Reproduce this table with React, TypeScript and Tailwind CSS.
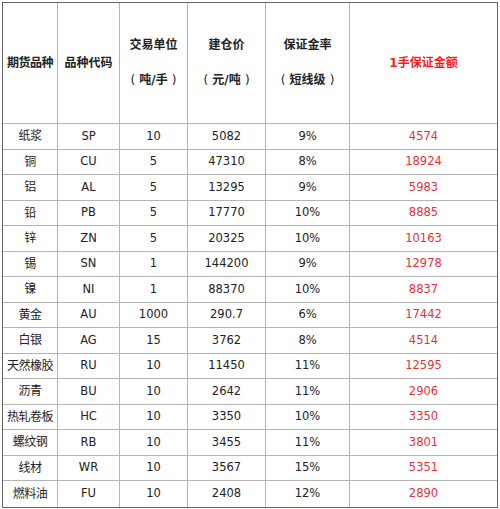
const rows: [string, string, string, string, string, string][] = [
  ["纸浆", "SP", "10", "5082", "9%", "4574"],
  ["铜", "CU", "5", "47310", "8%", "18924"],
  ["铝", "AL", "5", "13295", "9%", "5983"],
  ["铅", "PB", "5", "17770", "10%", "8885"],
  ["锌", "ZN", "5", "20325", "10%", "10163"],
  ["锡", "SN", "1", "144200", "9%", "12978"],
  ["镍", "NI", "1", "88370", "10%", "8837"],
  ["黄金", "AU", "1000", "290.7", "6%", "17442"],
  ["白银", "AG", "15", "3762", "8%", "4514"],
  ["天然橡胶", "RU", "10", "11450", "11%", "12595"],
  ["沥青", "BU", "10", "2642", "11%", "2906"],
  ["热轧卷板", "HC", "10", "3350", "10%", "3350"],
  ["螺纹钢", "RB", "10", "3455", "11%", "3801"],
  ["线材", "WR", "10", "3567", "15%", "5351"],
  ["燃料油", "FU", "10", "2408", "12%", "2890"],
];

export default function App() {
  return (
    <div className="w-[500px] h-[509px] bg-white pt-[2px] pl-[2px] font-['DejaVu_Sans','Noto_Sans_CJK_SC',sans-serif] text-[#222]">
      <div className="w-[496px] border border-[#666] grid grid-cols-[55px_62px_68px_78px_84px_1fr]">
        {/* 表头 */}
        <div className="h-[121px] flex items-center justify-center border-r border-b border-[#b4b4b4] font-bold text-[12px] tracking-[-0.5px]">
          期货品种
        </div>
        <div className="h-[121px] flex items-center justify-center border-r border-b border-[#b4b4b4] font-bold text-[12px]">
          品种代码
        </div>
        <div className="h-[121px] flex items-center justify-center text-center border-r border-b border-[#b4b4b4] font-bold text-[12px] leading-[35px]">
          <div>
            交易单位
            <br />
            <span className="font-normal">(</span>&nbsp;吨/手&nbsp;<span className="font-normal">)</span>
          </div>
        </div>
        <div className="h-[121px] flex items-center justify-center text-center border-r border-b border-[#b4b4b4] font-bold text-[12px] leading-[35px]">
          <div>
            建仓价
            <br />
            <span className="font-normal">(</span>&nbsp;元/吨&nbsp;<span className="font-normal">)</span>
          </div>
        </div>
        <div className="h-[121px] flex items-center justify-center text-center border-r border-b border-[#b4b4b4] font-bold text-[12px] leading-[35px]">
          <div>
            保证金率
            <br />
            <span className="font-normal">(</span>&nbsp;短线级&nbsp;<span className="font-normal">)</span>
          </div>
        </div>
        <div className="h-[121px] flex items-center justify-center border-b border-[#b4b4b4] font-bold text-[12px] text-[#f01e1e]">
          1手保证金额
        </div>

        {/* 数据行 */}
        {rows.map((r, i) => {
          const last = i === rows.length - 1;
          const cell = `h-[25.5px] flex items-center justify-center text-[11.5px] border-[#b4b4b4] ${
            last ? "" : "border-b"
          }`;
          return [
            <div key={`${i}-0`} className={`${cell} border-r text-[12px] tracking-[-0.5px]`}>
              {r[0]}
            </div>,
            <div key={`${i}-1`} className={`${cell} border-r`}>
              {r[1]}
            </div>,
            <div key={`${i}-2`} className={`${cell} border-r`}>
              {r[2]}
            </div>,
            <div key={`${i}-3`} className={`${cell} border-r`}>
              {r[3]}
            </div>,
            <div key={`${i}-4`} className={`${cell} border-r`}>
              {r[4]}
            </div>,
            <div key={`${i}-5`} className={`${cell} text-[#e3323c]`}>
              {r[5]}
            </div>,
          ];
        })}
      </div>
    </div>
  );
}
